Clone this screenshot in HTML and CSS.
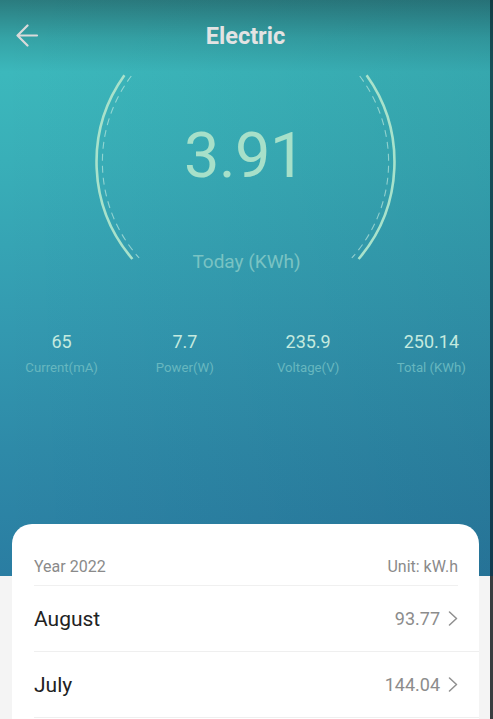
FILE: index.html
```html
<!DOCTYPE html>
<html lang="en">
<head>
<meta charset="utf-8">
<title>Electric</title>
<link rel="stylesheet" href="styles.css">
</head>
<body>
<div class="screen">
  <section class="hero">
    <header class="topbar">
      <button class="back" aria-label="Back">
        <svg width="24" height="24" viewBox="0 0 24 24"><path d="M22 11.5H2.5M12.5 1.5L2.5 11.5L12.5 21.5" fill="none" stroke="#dadada" stroke-width="2.2" stroke-linecap="round" stroke-linejoin="round"/></svg>
      </button>
      <h1 class="title">Electric</h1>
      <span class="spacer"></span>
    </header>

    <div class="gauge">
      <svg class="gauge-arcs" width="493" height="210" viewBox="0 0 493 210">
        <path d="M124.4 3.3 A149 149 0 0 0 132.4 187" fill="none" stroke="#a8e2cb" stroke-width="2.6"/>
        <path d="M366.6 3.3 A149 149 0 0 1 358.6 187" fill="none" stroke="#a8e2cb" stroke-width="2.6"/>
        <path d="M131.3 4 A143 143 0 0 0 139.2 186" fill="none" stroke="rgba(205,240,228,0.6)" stroke-width="1.1" stroke-dasharray="7 5"/>
        <path d="M359.7 4 A143 143 0 0 1 351.8 186" fill="none" stroke="rgba(205,240,228,0.6)" stroke-width="1.1" stroke-dasharray="7 5"/>
      </svg>
      <div class="reading">3.91</div>
      <div class="reading-label">Today (KWh)</div>
    </div>

    <div class="stats">
      <div class="stat"><div class="stat-value">65</div><div class="stat-label">Current(mA)</div></div>
      <div class="stat"><div class="stat-value">7.7</div><div class="stat-label">Power(W)</div></div>
      <div class="stat"><div class="stat-value">235.9</div><div class="stat-label">Voltage(V)</div></div>
      <div class="stat"><div class="stat-value">250.14</div><div class="stat-label">Total (KWh)</div></div>
    </div>
  </section>

  <section class="card">
    <div class="card-head">
      <span>Year 2022</span>
      <span>Unit: kW.h</span>
    </div>
    <div class="row">
      <span class="month">August</span>
      <span class="amount">93.77
        <svg class="chev" width="10" height="15" viewBox="0 0 10 15"><path d="M1.5 1L8.5 7.5L1.5 14" fill="none" stroke="#8f8f8f" stroke-width="1.5" stroke-linecap="round" stroke-linejoin="round"/></svg>
      </span>
    </div>
    <div class="row">
      <span class="month">July</span>
      <span class="amount">144.04
        <svg class="chev" width="10" height="15" viewBox="0 0 10 15"><path d="M1.5 1L8.5 7.5L1.5 14" fill="none" stroke="#8f8f8f" stroke-width="1.5" stroke-linecap="round" stroke-linejoin="round"/></svg>
      </span>
    </div>
  </section>
</div>
</body>
</html>
```

FILE: styles.css
```css
* { box-sizing: border-box; }

html, body {
  margin: 0;
  padding: 0;
}

body {
  background: #f4f4f4;
  font-family: Roboto, "Liberation Sans", Arial, sans-serif;
  width: 493px;
  height: 719px;
  overflow: hidden;
}

.screen {
  width: 493px;
  min-height: 719px;
  background: #f4f4f4;
  border-right: 3px solid #3a3d40;
}

.hero {
  height: 576px;
  margin-right: -3px;
  background:
    linear-gradient(to right, rgba(0, 20, 50, 0) 0%, rgba(0, 20, 50, 0.1) 100%),
    linear-gradient(to bottom, #2b7c7f 0px, #35a3a6 38px, #3cb8bc 72px, #39afb8 160px, #3399b0 330px, #2e8aa8 450px, #2a7da2 576px);
  box-shadow: inset -3px 0 0 rgba(5, 20, 30, 0.6);
  display: flex;
  flex-direction: column;
}

.topbar {
  height: 72px;
  display: grid;
  grid-template-columns: 60px 1fr 60px;
  align-items: center;
}

.back {
  background: none;
  border: 0;
  padding: 0;
  margin-left: 15px;
  width: 24px;
  height: 24px;
  display: flex;
}

.title {
  margin: 0;
  text-align: center;
  font-size: 23.5px;
  line-height: 24px;
  font-weight: 700;
  color: #e3e3e3;
  padding-right: 2px;
}

.gauge {
  position: relative;
  height: 210px;
  display: flex;
  flex-direction: column;
  align-items: center;
}

.gauge-arcs {
  position: absolute;
  left: 0;
  top: 0;
}

.reading {
  margin-top: 52px;
  font-size: 63px;
  line-height: 63px;
  color: #a7e0c9;
  letter-spacing: -0.5px;
  padding-right: 4px;
}

.reading-label {
  margin-top: 65px;
  font-size: 19px;
  line-height: 19px;
  color: #7ac3c3;
}

.stats {
  margin-top: 51px;
  display: grid;
  grid-template-columns: repeat(4, 1fr);
  text-align: center;
}

.stat-value {
  font-size: 18px;
  line-height: 18px;
  color: #c4eadf;
}

.stat-label {
  margin-top: 10px;
  font-size: 13.2px;
  line-height: 14px;
  color: #67b7bf;
}

.card {
  margin: -52px 11px 0 12px;
  background: #ffffff;
  border-radius: 20px 20px 0 0;
  position: relative;
  padding-bottom: 4px;
}

.card-head {
  margin: 0 21px 0 22px;
  padding: 35px 0 10px;
  display: flex;
  justify-content: space-between;
  font-size: 16px;
  line-height: 16px;
  color: #8a8a8a;
  border-bottom: 1px solid #f0f0f0;
}

.row {
  margin-left: 22px;
  padding-right: 21px;
  height: 66px;
  display: flex;
  align-items: center;
  justify-content: space-between;
  border-bottom: 1px solid #efefef;
}

.month {
  font-size: 21px;
  color: #222222;
}

.amount {
  display: flex;
  align-items: center;
  gap: 8px;
  font-size: 18px;
  color: #8c8c8c;
}

.chev {
  display: block;
}
```
